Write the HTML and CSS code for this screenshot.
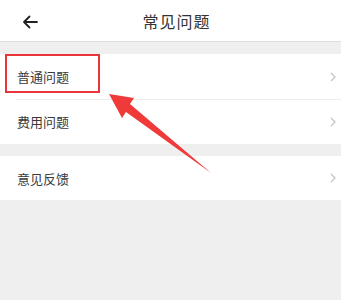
FILE: index.html
```html
<!DOCTYPE html>
<html lang="zh-CN">
<head>
  <meta charset="UTF-8" />
  <meta name="viewport" content="width=device-width, initial-scale=1" />
  <title>常见问题</title>
  <link rel="stylesheet" href="styles.css">
</head>
<body>
  <div class="pagina">
    <div class="topo">
      <svg class="voltar" width="16" height="14" viewBox="0 0 16 14">
        <path d="M15 7H2M7.5 1.5L2 7l5.5 5.5" fill="none" stroke="#222" stroke-width="1.8" stroke-linecap="round" stroke-linejoin="round"/>
      </svg>
      <div class="titulo">常见问题</div>
    </div>

    <div class="grupo">
      <div class="item">
        <span>普通问题</span>
        <svg class="seta" width="6" height="10" viewBox="0 0 6 10"><path d="M1 1l4 4-4 4" fill="none" stroke="#c4c4c4" stroke-width="1.3"/></svg>
      </div>
      <div class="item">
        <span>费用问题</span>
        <svg class="seta" width="6" height="10" viewBox="0 0 6 10"><path d="M1 1l4 4-4 4" fill="none" stroke="#c4c4c4" stroke-width="1.3"/></svg>
      </div>
    </div>

    <div class="grupo">
      <div class="item curto">
        <span>意见反馈</span>
        <svg class="seta" width="6" height="10" viewBox="0 0 6 10"><path d="M1 1l4 4-4 4" fill="none" stroke="#c4c4c4" stroke-width="1.3"/></svg>
      </div>
    </div>

    <!-- marcação por cima da captura -->
    <div class="destaque"></div>
    <svg class="flecha" width="341" height="300" viewBox="0 0 341 300">
      <polygon points="109,94 134,98 130,104 211,173 126,112 122,118" fill="#f03a3a"/>
    </svg>
  </div>
</body>
</html>
```

FILE: styles.css
```css
body {
  margin: 0;
  padding: 0;
  background: #efeff0;
  font-family: "Noto Sans CJK SC", "Noto Sans", sans-serif;
}
.pagina {
  position: relative;
  height: 300px;
  overflow: hidden;
}
.topo {
  height: 42px;
  background: #fff;
  border-bottom: 1px solid #dcdcdc;
  box-sizing: border-box;
  display: flex;
  align-items: center;
  justify-content: center;
  position: relative;
}
.voltar {
  position: absolute;
  left: 22px;
  top: 15px;
}
.titulo {
  font-size: 16px;
  color: #333;
  letter-spacing: 1px;
  margin-left: 12px;
}
.grupo {
  background: #fff;
  margin-top: 12px;
}
.item {
  height: 45px;
  display: flex;
  align-items: center;
  justify-content: space-between;
  padding: 0 5px 0 17px;
  font-size: 13px;
  color: #3a3a3a;
  position: relative;
}
.item + .item::before {
  content: "";
  position: absolute;
  left: 16px;
  right: 0;
  top: 0;
  border-top: 1px solid #ececec;
}
.item.curto {
  height: 44px;
}
.seta {
  display: block;
}
.destaque {
  position: absolute;
  left: 5px;
  top: 54px;
  width: 95px;
  height: 39px;
  border: 2.5px solid #e8343a;
  box-sizing: border-box;
}
.flecha {
  position: absolute;
  left: 0;
  top: 0;
}
```
